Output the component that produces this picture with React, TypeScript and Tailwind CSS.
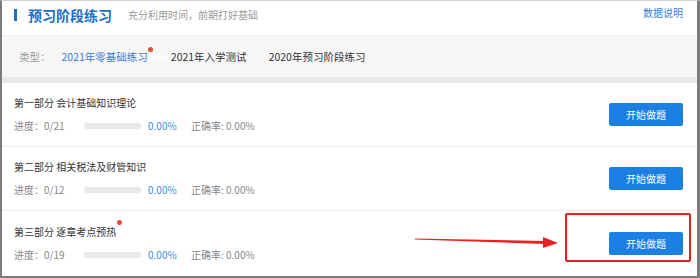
import React from "react";

const font = { fontFamily: '"Noto Sans CJK SC", "Noto Sans", sans-serif' };

type Row = { title: string; total: number; dot?: boolean };

const rows: Row[] = [
  { title: "第一部分 会计基础知识理论", total: 21 },
  { title: "第二部分 相关税法及财管知识", total: 12 },
  { title: "第三部分 逐章考点预热", total: 19, dot: true },
];

function PracticeRow({ row, last }: { row: Row; last: boolean }) {
  return (
    <div
      className={`flex h-[64px] items-center justify-between pl-[12px] pr-[14px] ${
        last ? "" : "border-b border-[#ececec]"
      }`}
    >
      <div className="flex flex-col">
        <div className="flex h-[14px] items-center">
          <span className="relative text-[10px] leading-[14px] text-[#333]">
            {row.title}
            {row.dot && (
              <span className="absolute -right-[6px] -top-[5px] h-[5px] w-[5px] rounded-full bg-[#ea4b34]" />
            )}
          </span>
        </div>
        <div className="mt-[9px] flex h-[14px] items-center text-[10px] leading-[14px] text-[#888]">
          <span className="w-[70px]">进度：0/{row.total}</span>
          <span className="h-[6px] w-[57px] rounded-full bg-[#e9e9e9]" />
          <span className="ml-[7px] w-[43px] text-[#3f8ddf]">0.00%</span>
          <span>正确率: 0.00%</span>
        </div>
      </div>
      <button className="h-[23px] w-[74px] rounded-[2px] bg-[#1b7fe3] text-[10px] leading-[23px] text-white">
        开始做题
      </button>
    </div>
  );
}

export default function App() {
  return (
    <div
      style={font}
      className="relative h-[278px] w-[700px] overflow-hidden bg-white"
    >
      <div className="flex h-[278px] w-[700px] flex-col border-b-2 border-l-2 border-r-[3px] border-t border-b-[#7c7c7c] border-l-[#7c7c7c] border-r-[#7c7c7c] border-t-[#d0d0d0]">
        {/* header */}
        <div className="flex h-[34px] items-start justify-between pl-[12px] pr-[14px]">
          <div className="mt-[6px] flex items-center">
            <span className="h-[12px] w-[3px] bg-[#1e6ec8]" />
            <span className="ml-[11px] text-[14px] font-bold leading-[16px] text-[#1e6ec8]">
              预习阶段练习
            </span>
            <span className="ml-[16px] text-[10px] leading-[16px] text-[#9a9a9a]">
              充分利用时间，前期打好基础
            </span>
          </div>
          <span className="mt-[5px] text-[10px] leading-[14px] text-[#3b7ed4]">
            数据说明
          </span>
        </div>
        {/* filter */}
        <div className="flex h-[42px] items-center border-t border-[#efefef] bg-[#f6f6f7] pl-[17px] text-[10.5px] leading-[14px]">
          <span className="text-[#9a9a9a]">类型：</span>
          <span className="relative ml-[11px] text-[#3a7bd0]">
            2021年零基础练习
            <span className="absolute -right-[5px] -top-[3px] h-[5px] w-[5px] rounded-full bg-[#ea4b34]" />
            <span className="absolute -right-[22px] top-[3px] text-[9px] leading-[10px] text-white">
              NEW
            </span>
          </span>
          <span className="ml-[23px] text-[#333]">2021年入学测试</span>
          <span className="ml-[22px] text-[#333]">2020年预习阶段练习</span>
        </div>
        <div className="h-[6px] bg-[#e9eaec]" />
        {/* rows */}
        <div className="flex flex-col">
          {rows.map((r, i) => (
            <PracticeRow key={i} row={r} last={i === rows.length - 1} />
          ))}
        </div>
      </div>

      {/* annotation: red box */}
      <div className="absolute left-[565px] top-[213px] h-[49px] w-[126px] rounded-[2px] border-2 border-[#e3211f]" />
      {/* annotation: arrow */}
      <svg
        className="absolute left-[410px] top-[232px]"
        width="152"
        height="20"
        viewBox="0 0 152 20"
      >
        <polygon points="5,6.5 136,9 136,12 5,7.5" fill="#e8231f" />
        <polygon points="133,5 148,11 133,16" fill="#e8231f" />
      </svg>
    </div>
  );
}
